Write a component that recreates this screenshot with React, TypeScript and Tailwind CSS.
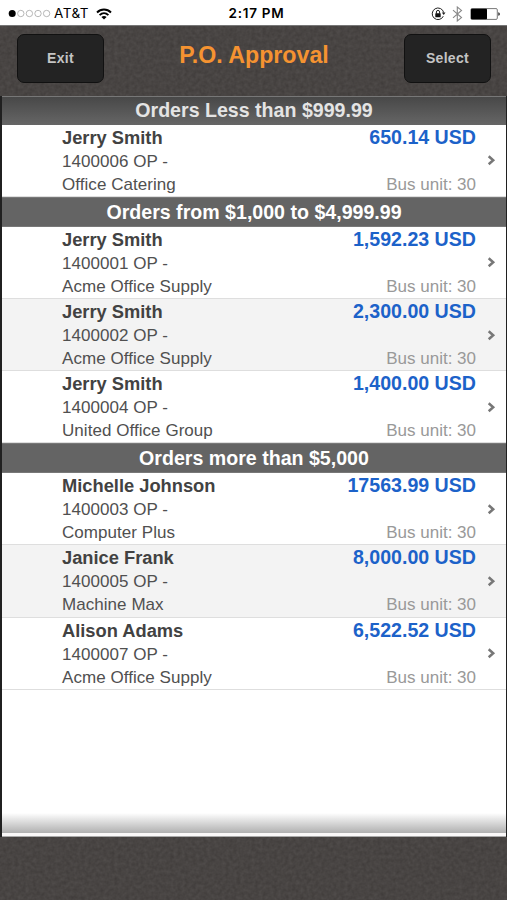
import React from "react";

type Order = { name: string; id: string; vendor: string; amount: string; shaded?: boolean };

const sections: { title: string; first?: boolean; orders: Order[] }[] = [
  {
    title: "Orders Less than $999.99",
    first: true,
    orders: [{ name: "Jerry Smith", id: "1400006 OP -", vendor: "Office Catering", amount: "650.14 USD" }],
  },
  {
    title: "Orders from $1,000 to $4,999.99",
    orders: [
      { name: "Jerry Smith", id: "1400001 OP -", vendor: "Acme Office Supply", amount: "1,592.23 USD" },
      { name: "Jerry Smith", id: "1400002 OP -", vendor: "Acme Office Supply", amount: "2,300.00 USD", shaded: true },
      { name: "Jerry Smith", id: "1400004 OP -", vendor: "United Office Group", amount: "1,400.00 USD" },
    ],
  },
  {
    title: "Orders more than $5,000",
    orders: [
      { name: "Michelle Johnson", id: "1400003 OP -", vendor: "Computer Plus", amount: "17563.99 USD" },
      { name: "Janice Frank", id: "1400005 OP -", vendor: "Machine Max", amount: "8,000.00 USD", shaded: true },
      { name: "Alison Adams", id: "1400007 OP -", vendor: "Acme Office Supply", amount: "6,522.52 USD" },
    ],
  },
];

function Grain({ id }: { id: string }) {
  return (
    <svg className="absolute inset-0 h-full w-full" aria-hidden="true">
      <filter id={id} x="0" y="0" width="100%" height="100%" colorInterpolationFilters="sRGB">
        <feTurbulence type="fractalNoise" baseFrequency="0.27" numOctaves="2" seed="8" />
        <feColorMatrix values="0.08 0 0 0 0.243  0.08 0 0 0 0.228  0.08 0 0 0 0.222  0 0 0 0 1" />
      </filter>
      <rect width="100%" height="100%" filter={`url(#${id})`} />
    </svg>
  );
}

function StatusBar() {
  return (
    <div className="grid h-[25px] grid-cols-3 items-center bg-white pt-[2px] text-black">
      <div className="flex items-center pl-[8px]">
        <svg width="43" height="9" viewBox="0 0 43 9">
          <circle cx="4.2" cy="4.5" r="3.5" />
          {[12.8, 21.4, 30, 38.6].map((x) => (
            <circle key={x} cx={x} cy="4.5" r="3.2" fill="none" stroke="#999" strokeWidth="0.7" />
          ))}
        </svg>
        <span className="ml-[3px] font-[Inter,sans-serif] text-[13.5px] leading-none tracking-[0.5px]">AT&amp;T</span>
        <svg className="ml-[7px]" width="16" height="12" viewBox="0 0 16 12" fill="none" stroke="#000" strokeWidth="1.9">
          <path d="M1 4.5C5 .5 11 .5 15 4.5M3.6 7.1C6.2 4.6 9.8 4.6 12.4 7.1" />
          <path d="M5.4 8.9C6.9 7.6 9.1 7.6 10.6 8.9L8 11.6Z" fill="#000" stroke="none" />
        </svg>
      </div>
      <span className="pl-[6px] text-center font-[Inter,sans-serif] text-[13.5px] font-semibold leading-none tracking-[0.75px]">
        2:17 PM
      </span>
      <div className="flex items-center justify-end pr-[6px]">
        <svg width="15" height="14" viewBox="0 0 15 14" fill="none" stroke="#222">
          <path d="M12.3 9.2A5.8 5.8 0 1 1 12.7 5.6" strokeWidth="1" />
          <path d="M10.8 5.5h3.7l-1.8 2.5z" fill="#222" stroke="none" />
          <path d="M5.4 6.7V5a1.6 1.6 0 0 1 3.2 0v1.7" strokeWidth="1" />
          <rect x="4.3" y="6.2" width="5.4" height="4" rx=".5" fill="#111" stroke="none" />
        </svg>
        <svg className="ml-[6px]" width="11" height="16" viewBox="0 0 11 16" fill="none" stroke="#888" strokeWidth="1.1">
          <path d="M1 4.2l8.5 7.4L5.3 15V1l4.2 3.4L1 11.8" />
        </svg>
        <svg className="ml-[7px]" width="31" height="12" viewBox="0 0 31 12">
          <rect x=".9" y=".6" width="26.4" height="10.8" rx="1.2" fill="#fff" stroke="#555" strokeWidth=".8" />
          <rect x="1" y=".8" width="16" height="10.4" rx=".8" fill="#000" />
          <path d="M28.3 4.2c2 .3 2 3.3 0 3.6z" fill="#222" />
        </svg>
      </div>
    </div>
  );
}

function HeaderButton({ label }: { label: string }) {
  return (
    <button className="flex h-[49px] w-[87px] items-center justify-center rounded-[7px] border-[1.5px] border-[#111] bg-[#232323] text-[14px] font-bold tracking-[0.3px] text-[#c4c4c4]">
      {label}
    </button>
  );
}

function OrderRow({ order }: { order: Order }) {
  return (
    <div
      className={
        "flex h-[72.3px] border-b border-[#dedede] pl-[60px] pr-[10px] text-[17px] text-[#505050] " +
        (order.shaded ? "bg-[#f3f3f3]" : "bg-white")
      }
    >
      <div className="flex-1 whitespace-nowrap">
        <div className="h-[25.1px] text-[18.3px] font-bold leading-[26px] text-[#424242]">{order.name}</div>
        <div className="h-[23px] leading-[24px] tracking-[0.04px]">{order.id}</div>
        <div className="h-[23px] leading-[24px] tracking-[0.05px]">{order.vendor}</div>
      </div>
      <div className="flex flex-col justify-between whitespace-nowrap text-right">
        <div className="text-[19.6px] font-bold leading-[25.5px] text-[#1c62c9]">{order.amount}</div>
        <div className="h-[23.2px] leading-[24px] text-[#999]">Bus unit: 30</div>
      </div>
      <svg className="ml-[11px] mt-[30.8px] shrink-0" width="9" height="11" viewBox="0 0 9 11" fill="none" stroke="#777" strokeWidth="2.5">
        <path d="M1.7 1.3L6.2 5.3L1.7 9.3" />
      </svg>
    </div>
  );
}

export default function App() {
  return (
    <div className="flex h-[900px] w-[507px] flex-col overflow-hidden bg-[#474341] font-['Liberation_Sans',Arial,sans-serif]">
      <StatusBar />
      <header className="relative h-[71px] border-t border-[#777] bg-[#484443]">
        <Grain id="grain-top" />
        <div className="relative flex items-start justify-between pl-[17px] pr-[16px] pt-[8px]">
          <HeaderButton label="Exit" />
          <h1 className="mt-[6px] text-[23.2px] font-bold leading-[30px] text-[#f59331]">P.O. Approval</h1>
          <HeaderButton label="Select" />
        </div>
      </header>
      <main className="flex h-[741px] flex-col border-l-2 border-r border-[#202020] bg-white">
        {sections.map((section) => (
          <section key={section.title}>
            <h2
              className={
                "text-center text-[19.6px] font-bold " +
                (section.first
                  ? "h-[28.7px] border-t border-[#777] bg-linear-to-b from-[#484848] to-[#666] leading-[27px] text-[#e4e4e4]"
                  : "h-[29.6px] border-y border-[#787878] bg-[#646464] leading-[28.8px] text-white")
              }
            >
              {section.title}
            </h2>
            {section.orders.map((order) => (
              <OrderRow key={order.id} order={order} />
            ))}
          </section>
        ))}
        <div className="mt-auto h-[20px] bg-linear-to-b from-white to-[#b0b0b0]" />
        <div className="h-[4px] shrink-0 border-b border-[#aaa] bg-[#faf8f8]" />
      </main>
      <footer className="relative flex-1">
        <Grain id="grain-bottom" />
      </footer>
    </div>
  );
}
